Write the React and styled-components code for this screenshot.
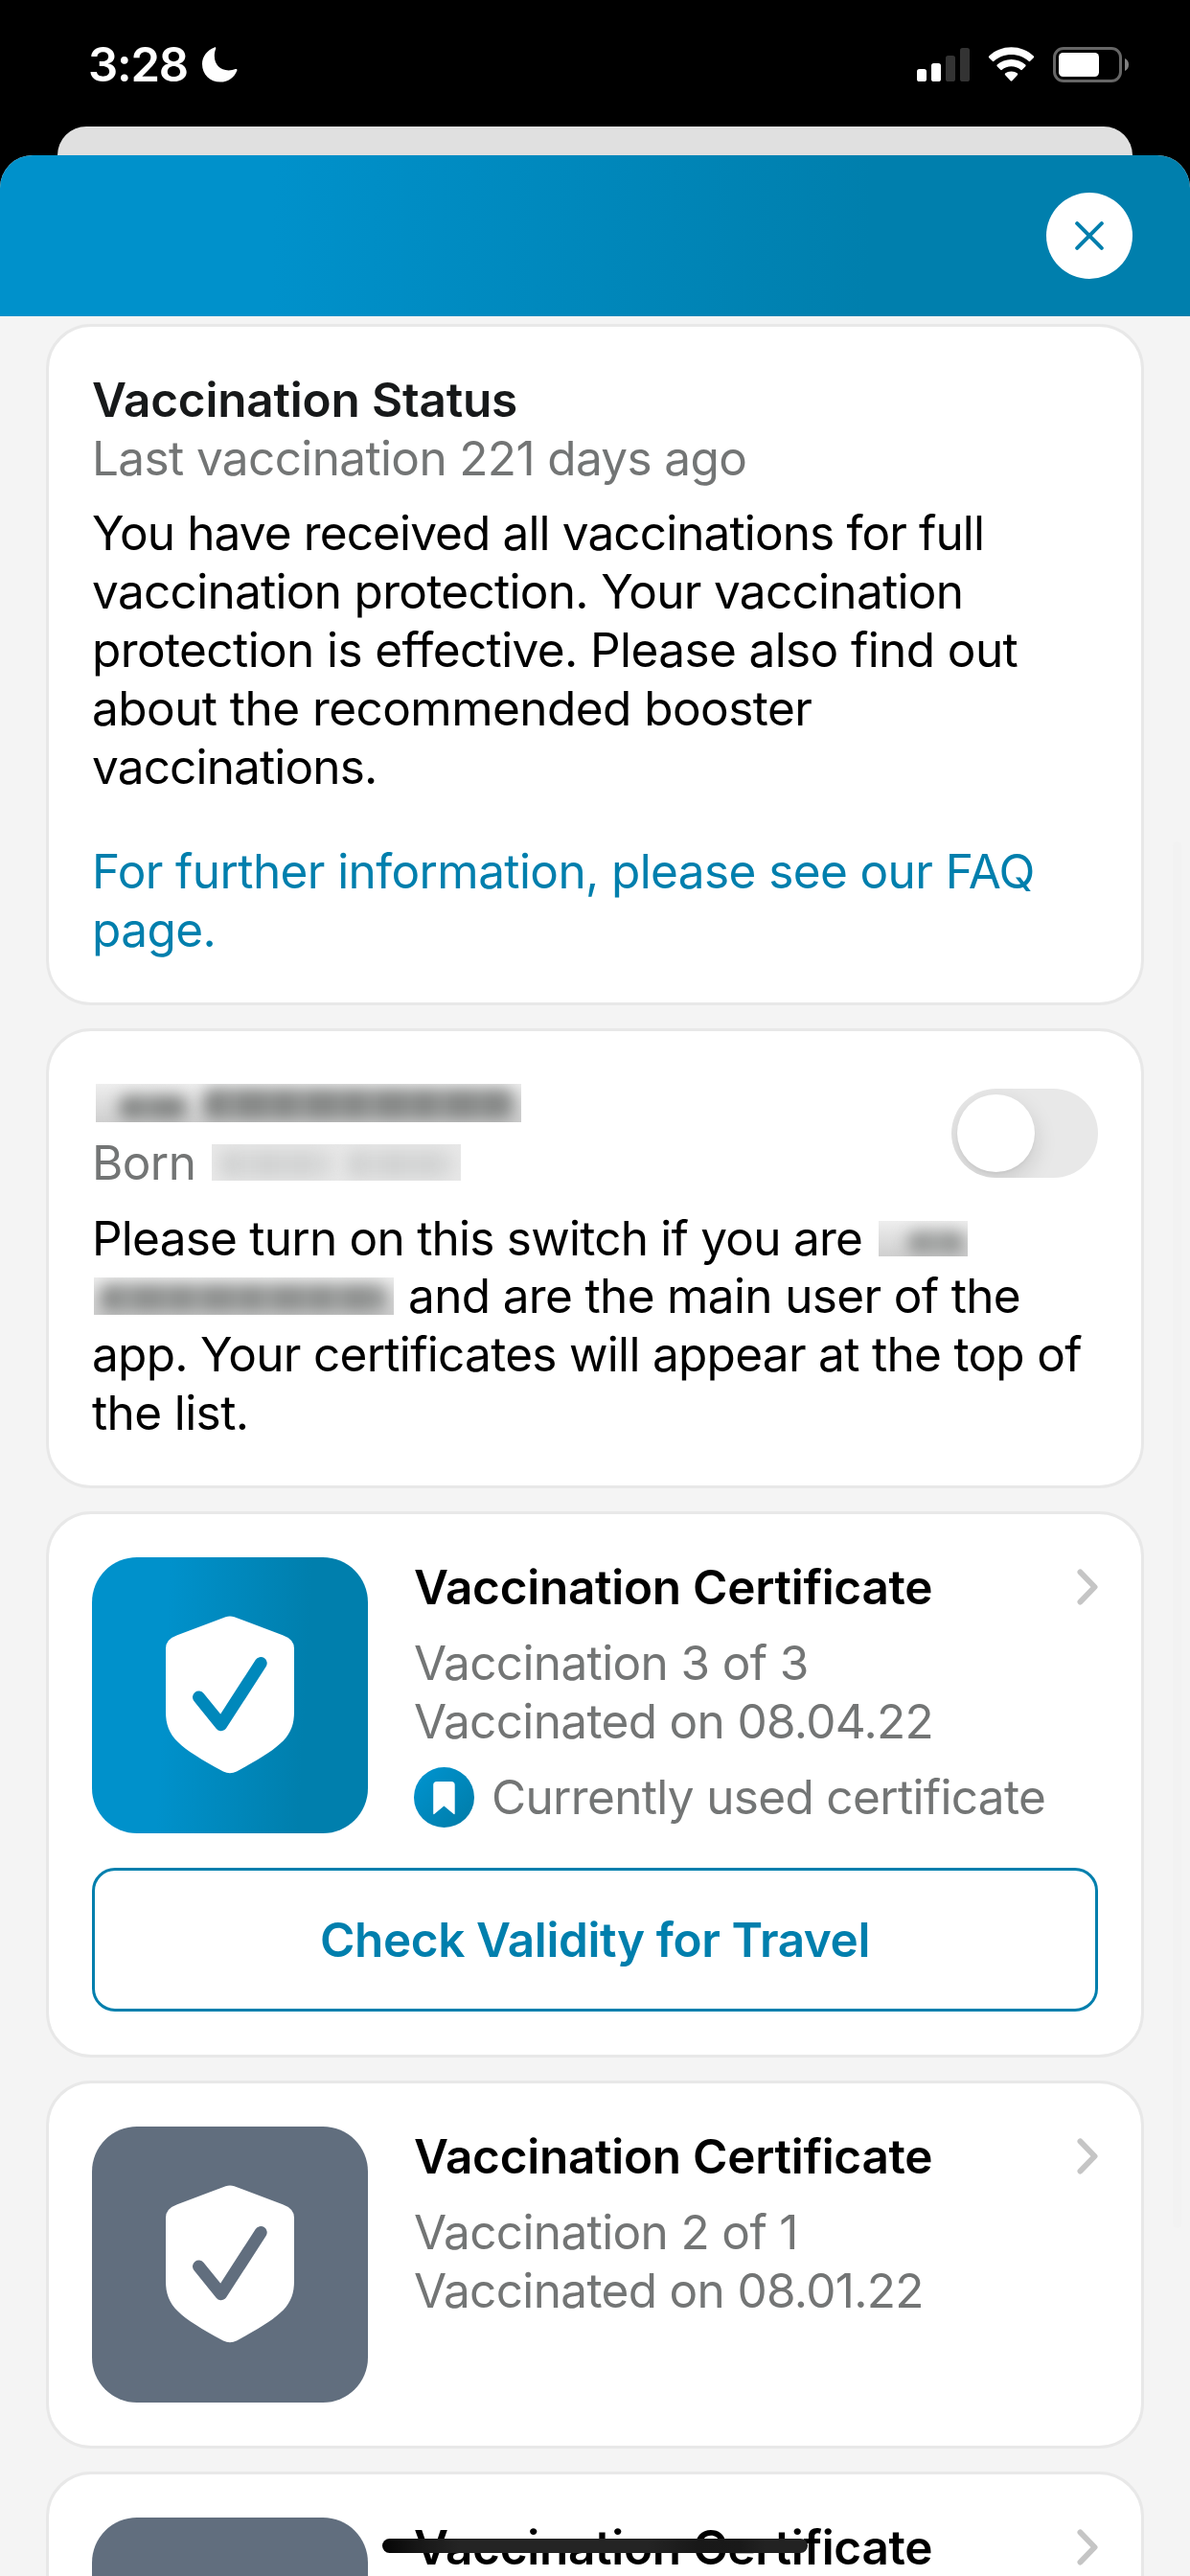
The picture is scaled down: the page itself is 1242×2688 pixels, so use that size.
import React from "react";
import styled, { createGlobalStyle, css } from "styled-components";

const BLUE = "#007fad";
const GRAY = "#737575";

const GlobalStyle = createGlobalStyle`
  html, body { margin: 0; padding: 0; background: #000; }
  body {
    width: 1242px;
    height: 2688px;
    overflow: hidden;
    font-family: Inter, "Liberation Sans", sans-serif;
  }
  * { box-sizing: border-box; }
`;

const Screen = styled.div`
  position: relative;
  display: flex;
  flex-direction: column;
  width: 1242px;
  height: 2688px;
  overflow: hidden;
  background: #000;
`;

const StatusBar = styled.header`
  display: flex;
  justify-content: space-between;
  align-items: flex-start;
  height: 132px;
  flex: none;
  padding: 49px 64px 0 92px;
`;

const StatusGroup = styled.div`
  display: flex;
  align-items: flex-start;
`;

const Time = styled.span`
  width: 119px;
  height: 37px;
  color: #fff;
  font-size: 49px;
  font-weight: 600;
  line-height: 37px;
  letter-spacing: -1.2px;
  white-space: nowrap;
`;

const SheetBehind = styled.div`
  flex: none;
  height: 30px;
  margin: 0 60px;
  border-radius: 30px 30px 0 0;
  background: #e0e0e0;
`;

const Sheet = styled.main`
  flex: 1;
  min-height: 0;
  display: flex;
  flex-direction: column;
  border-radius: 34px 34px 0 0;
  overflow: hidden;
  background: #f4f4f4;
`;

const SheetHeader = styled.div`
  flex: none;
  display: flex;
  justify-content: flex-end;
  align-items: center;
  height: 168px;
  padding-right: 60px;
  background: linear-gradient(92deg, #0091cb 23%, #007fad 73%);
`;

const CloseButton = styled.button`
  display: flex;
  align-items: center;
  justify-content: center;
  width: 90px;
  height: 90px;
  padding: 0;
  border: 0;
  border-radius: 50%;
  background: #fff;
`;

const CardList = styled.div`
  display: flex;
  flex-direction: column;
  gap: 24px;
  padding: 8px 48px 0;
`;

const Card = styled.section`
  flex: none;
  display: flex;
  flex-direction: column;
  height: ${(p) => p.$height}px;
  padding: 45px;
  border: 3px solid #e8e8e8;
  border-radius: 47px;
  background: #fff;
`;

const textBase = css`
  margin: 0;
  font-size: 49.5px;
  line-height: 60.85px;
  white-space: nowrap;
  letter-spacing: ${(p) => p.$track ?? -0.6}px;
`;

const Title = styled.h2`
  ${textBase}
  padding-top: 1px;
  margin-bottom: -1px;
  font-weight: 600;
  color: ${(p) => p.$color ?? "#000"};
`;

const Caption = styled.p`
  ${textBase}
  padding-top: 1px;
  margin-bottom: -1px;
  color: ${GRAY};
`;

const BirthDate = styled.div`
  ${textBase}
  color: ${GRAY};
`;

const Body = styled.p`
  ${textBase}
  margin-top: 18px;
  color: #000;
`;

const Line = styled.span`
  display: flex;
  align-items: center;
  height: 60.85px;
  padding-top: 1.6px;
  letter-spacing: ${(p) => p.$track ?? -0.6}px;
`;

const FaqLink = styled.a`
  ${textBase}
  margin-top: 48px;
  color: ${BLUE};
`;

const PersonRow = styled.div`
  display: flex;
  justify-content: space-between;
  align-items: flex-start;
`;

const NameLine = styled.div`
  display: flex;
  height: 61px;
  padding: 10px 0 0 4px;
`;

const Redacted = styled.span`
  flex: none;
  display: inline-flex;
  align-items: flex-end;
  gap: 16px;
  overflow: hidden;
  width: ${(p) => p.$width}px;
  height: ${(p) => p.$height}px;
  margin-left: ${(p) => p.$left ?? 0}px;
  margin-right: ${(p) => p.$right ?? 0}px;
  background: ${(p) => p.$base ?? "linear-gradient(#eeeeee, #cfcfcf)"};
`;

const Smudge = styled.span`
  flex: none;
  width: ${(p) => p.$width}px;
  height: ${(p) => p.$height}px;
  margin-left: ${(p) => p.$left ?? 0}px;
  margin-bottom: 2px;
  border-radius: 10px;
  background: repeating-linear-gradient(
    90deg,
    ${(p) => p.$tone} 0 22px,
    ${(p) => p.$light} 28px 33px,
    ${(p) => p.$tone} 37px 64px,
    ${(p) => p.$light} 70px 73px
  );
  filter: blur(8px);
`;

const Switch = styled.button`
  display: flex;
  align-items: center;
  width: 153px;
  height: 93px;
  margin-top: 15px;
  padding: 6px;
  border: 0;
  border-radius: 47px;
  background: #e8e8e8;
  overflow: hidden;
`;

const Knob = styled.span`
  width: 81px;
  height: 81px;
  border-radius: 50%;
  background: #fff;
  box-shadow: 0 9px 24px rgba(0, 0, 0, 0.14), 0 2px 3px rgba(0, 0, 0, 0.04);
`;

const CertRow = styled.div`
  display: flex;
  gap: 48px;
  height: 288px;
`;

const Tile = styled.div`
  flex: none;
  width: 288px;
  height: 288px;
  border-radius: 47px;
  background: ${(p) =>
    p.$active ? "linear-gradient(93deg, #0091cb 27%, #007fad 76%)" : "#616e7e"};
`;

const CertInfo = styled.div`
  flex: 1;
  display: flex;
  flex-direction: column;
`;

const CertHead = styled.div`
  display: flex;
  justify-content: space-between;
  align-items: flex-start;
  height: 60.85px;
  margin-bottom: 18px;
`;

const Chevron = styled.svg`
  display: block;
  margin-top: 12px;
`;

const UsedRow = styled.div`
  display: flex;
  gap: 18px;
  margin-top: 18px;
`;

const OutlineButton = styled.button`
  display: flex;
  align-items: center;
  justify-content: center;
  height: 150px;
  margin-top: 36px;
  padding: 0;
  border: 3px solid ${BLUE};
  border-radius: 24px;
  background: #fff;
  color: ${BLUE};
  font-family: inherit;
  font-size: 49.5px;
  font-weight: 600;
  letter-spacing: -0.42px;
`;

const ScrollThumb = styled.div`
  position: absolute;
  top: 878px;
  right: 9px;
  width: 9px;
  height: 1447px;
  border-radius: 5px;
  background: #f2f2f2;
`;

const HomeIndicator = styled.div`
  position: absolute;
  left: 399px;
  bottom: 24px;
  width: 444px;
  height: 15px;
  border-radius: 8px;
  background: linear-gradient(90deg, #050505, #161616 8%, #242424 18%, #242424 62%, #181818 74%, #191919 84%, #222 90%, #222);
`;

function Moon() {
  return (
    <svg width="37" height="37" viewBox="0 0 37 37">
      <path
        d="M12.8 0.5C13.8 0 14.6 0.8 14.2 1.9C13.2 4.2 12.8 6.8 12.8 9.3C12.8 18.4 18.8 24.4 27.6 24.4C30.2 24.4 32.8 23.9 34.8 23C35.9 22.6 36.8 23.3 36.4 24.4C33.8 31.6 27.2 36.6 19 36.6C8 36.6 0 28.8 0 17.8C0 10.2 5.2 3.2 12.8 0.5Z"
        fill="#fff"
      />
    </svg>
  );
}

function StatusIcons() {
  return (
    <svg width="221" height="37" viewBox="957 49 221 37">
      <rect x="957" y="72" width="10" height="13" rx="2.6" fill="#fff" />
      <rect x="972" y="66" width="10" height="19" rx="2.6" fill="#fff" />
      <rect x="987" y="58" width="10" height="27" rx="2.6" fill="#333" />
      <rect x="1002" y="50" width="10" height="35" rx="2.6" fill="#333" />
      <g fill="#fff">
        <path d="M1055.5 49.3C1064.5 49.3 1072.8 52.7 1078.8 58.6Q1079.6 59.4 1078.8 60.2L1075.2 63.8Q1074.4 64.5 1073.6 63.8C1068.8 59.3 1062.4 56.9 1055.5 56.9C1048.6 56.9 1042.2 59.3 1037.4 63.8Q1036.6 64.5 1035.8 63.8L1032.2 60.2Q1031.4 59.4 1032.2 58.6C1038.2 52.7 1046.5 49.3 1055.5 49.3Z" />
        <path d="M1055.5 61.9C1061.2 61.9 1066.4 64 1070.3 67.6Q1071.1 68.4 1070.3 69.2L1066.8 72.8Q1066 73.5 1065.2 72.8C1062.6 70.6 1059.2 69.3 1055.5 69.3C1051.8 69.3 1048.4 70.6 1045.8 72.8Q1045 73.5 1044.2 72.8L1040.7 69.2Q1039.9 68.4 1040.7 67.6C1044.6 64 1049.8 61.9 1055.5 61.9Z" />
        <path d="M1055.5 74.4C1058 74.4 1060.2 75.2 1061.9 76.6Q1062.7 77.4 1061.9 78.2L1056.4 84.3Q1055.5 85.2 1054.6 84.3L1049.1 78.2Q1048.3 77.4 1049.1 76.6C1050.8 75.2 1053 74.4 1055.5 74.4Z" />
      </g>
      <rect x="1100.5" y="50.5" width="69" height="34" rx="9.5" fill="none" stroke="#666" strokeWidth="3" />
      <rect x="1105" y="55" width="42" height="25" rx="4.5" fill="#fff" />
      <path d="M1174 61C1176.5 62 1178 64.5 1178 67.5C1178 70.5 1176.5 73 1174 74Z" fill="#808080" />
    </svg>
  );
}

function CloseIcon() {
  return (
    <svg width="32" height="32" viewBox="0 0 32 32">
      <path d="M3.2 3.2L28.8 28.8M28.8 3.2L3.2 28.8" stroke={BLUE} strokeWidth="4" strokeLinecap="round" />
    </svg>
  );
}

function ShieldTile({ active }) {
  return (
    <Tile $active={active}>
      <svg width="288" height="288" viewBox="0 0 288 288">
        <path
          d="M139.5 62.2Q144 60.6 148.5 62.2L199 81.2Q211 85.5 211 95V161C211 188 197 198 151 223.6Q144 227 137 223.6C91 198 77 188 77 161V95Q77 85.5 89 81.2Z"
          fill="#fff"
        />
        <path
          d="M111.5 146L134.7 174.7L176.2 110.5"
          fill="none"
          stroke={active ? "#0088bb" : "#616e7e"}
          strokeWidth="13"
          strokeLinecap="round"
          strokeLinejoin="round"
        />
      </svg>
    </Tile>
  );
}

function BookmarkBadge() {
  return (
    <svg width="63" height="63" viewBox="0 0 63 63">
      <defs>
        <linearGradient id="badge" x1="0" y1="0" x2="1" y2="1">
          <stop offset="0.15" stopColor="#0091cb" />
          <stop offset="0.85" stopColor="#007fad" />
        </linearGradient>
      </defs>
      <circle cx="31.5" cy="31.5" r="31.5" fill="url(#badge)" />
      <path d="M24 15H39Q42.7 15 42.7 18.7V48Q42.7 50 41 48.6L31.4 40.6L21.8 48.6Q20.2 50 20.2 48V18.7Q20.2 15 24 15Z" fill="#fff" />
    </svg>
  );
}

function Certificate({ active, dose, date, height }) {
  return (
    <Card $height={height}>
      <CertRow>
        <ShieldTile active={active} />
        <CertInfo>
          <CertHead>
            <Title $track={-0.27}>Vaccination Certificate</Title>
            <Chevron width="22" height="38" viewBox="0 0 22 38">
              <path d="M3.5 3.5L18.5 19L3.5 34.5" fill="none" stroke="#c5c5c5" strokeWidth="6" strokeLinecap="round" strokeLinejoin="round" />
            </Chevron>
          </CertHead>
          {dose && <Caption $track={-0.63}>{dose}</Caption>}
          {date && <Caption $track={-0.66}>{date}</Caption>}
          {active && (
            <UsedRow>
              <BookmarkBadge />
              <Caption $track={-0.67}>Currently used certificate</Caption>
            </UsedRow>
          )}
        </CertInfo>
      </CertRow>
      {active && <OutlineButton>Check Validity for Travel</OutlineButton>}
    </Card>
  );
}

export default function App() {
  return (
    <Screen>
      <GlobalStyle />
      <StatusBar>
        <StatusGroup>
          <Time>3:28</Time>
          <Moon />
        </StatusGroup>
        <StatusIcons />
      </StatusBar>
      <SheetBehind />
      <Sheet>
        <SheetHeader>
          <CloseButton aria-label="Close">
            <CloseIcon />
          </CloseButton>
        </SheetHeader>
        <CardList>
          <Card $height={711}>
            <Title $color="#17191a" $track={-0.2}>Vaccination Status</Title>
            <Caption $track={-0.63}>Last vaccination 221 days ago</Caption>
            <Body>
              <Line $track={-0.88}>You have received all vaccinations for full</Line>
              <Line $track={-0.7}>vaccination protection. Your vaccination</Line>
              <Line>protection is effective. Please also find out</Line>
              <Line $track={-0.55}>about the recommended booster</Line>
              <Line $track={-0.85}>vaccinations.</Line>
            </Body>
            <FaqLink>
              <Line>For further information, please see our FAQ</Line>
              <Line>page.</Line>
            </FaqLink>
          </Card>

          <Card $height={480}>
            <PersonRow>
              <div>
                <NameLine>
                  <Redacted $width={444} $height={40}>
                    <Smudge $width={72} $height={26} $tone="#868887" $light="#9a9c9b" $left={24} />
                    <Smudge $width={326} $height={33} $tone="#868887" $light="#9a9c9b" />
                  </Redacted>
                </NameLine>
                <BirthDate>
                  <Line>
                    Born
                    <Redacted $width={260} $height={38} $left={17} $base="#e8e8e8">
                      <Smudge $width={116} $height={30} $tone="#d2d3d3" $light="#dadbdb" $left={8} />
                      <Smudge $width={112} $height={30} $tone="#d2d3d3" $light="#dadbdb" />
                    </Redacted>
                  </Line>
                </BirthDate>
              </div>
              <Switch role="switch" aria-checked="false" aria-label="Main user">
                <Knob />
              </Switch>
            </PersonRow>
            <Body as="div">
              <Line $track={-0.76}>
                Please turn on this switch if you are
                <Redacted $width={93} $height={37} $left={17}>
                  <Smudge $width={60} $height={24} $tone="#969897" $light="#a8aaa9" $left={30} />
                </Redacted>
              </Line>
              <Line $track={-0.65}>
                <Redacted $width={313} $height={39} $left={2} $right={15}>
                  <Smudge $width={300} $height={30} $tone="#8e908f" $light="#a2a4a3" $left={6} />
                </Redacted>
                and are the main user of the
              </Line>
              <Line $track={-0.7}>app. Your certificates will appear at the top of</Line>
              <Line>the list.</Line>
            </Body>
          </Card>

          <Certificate active height={570} dose="Vaccination 3 of 3" date="Vaccinated on 08.04.22" />
          <Certificate height={384} dose="Vaccination 2 of 1" date="Vaccinated on 08.01.22" />
          <Certificate height={384} />
        </CardList>
      </Sheet>
      <ScrollThumb />
      <HomeIndicator />
    </Screen>
  );
}
